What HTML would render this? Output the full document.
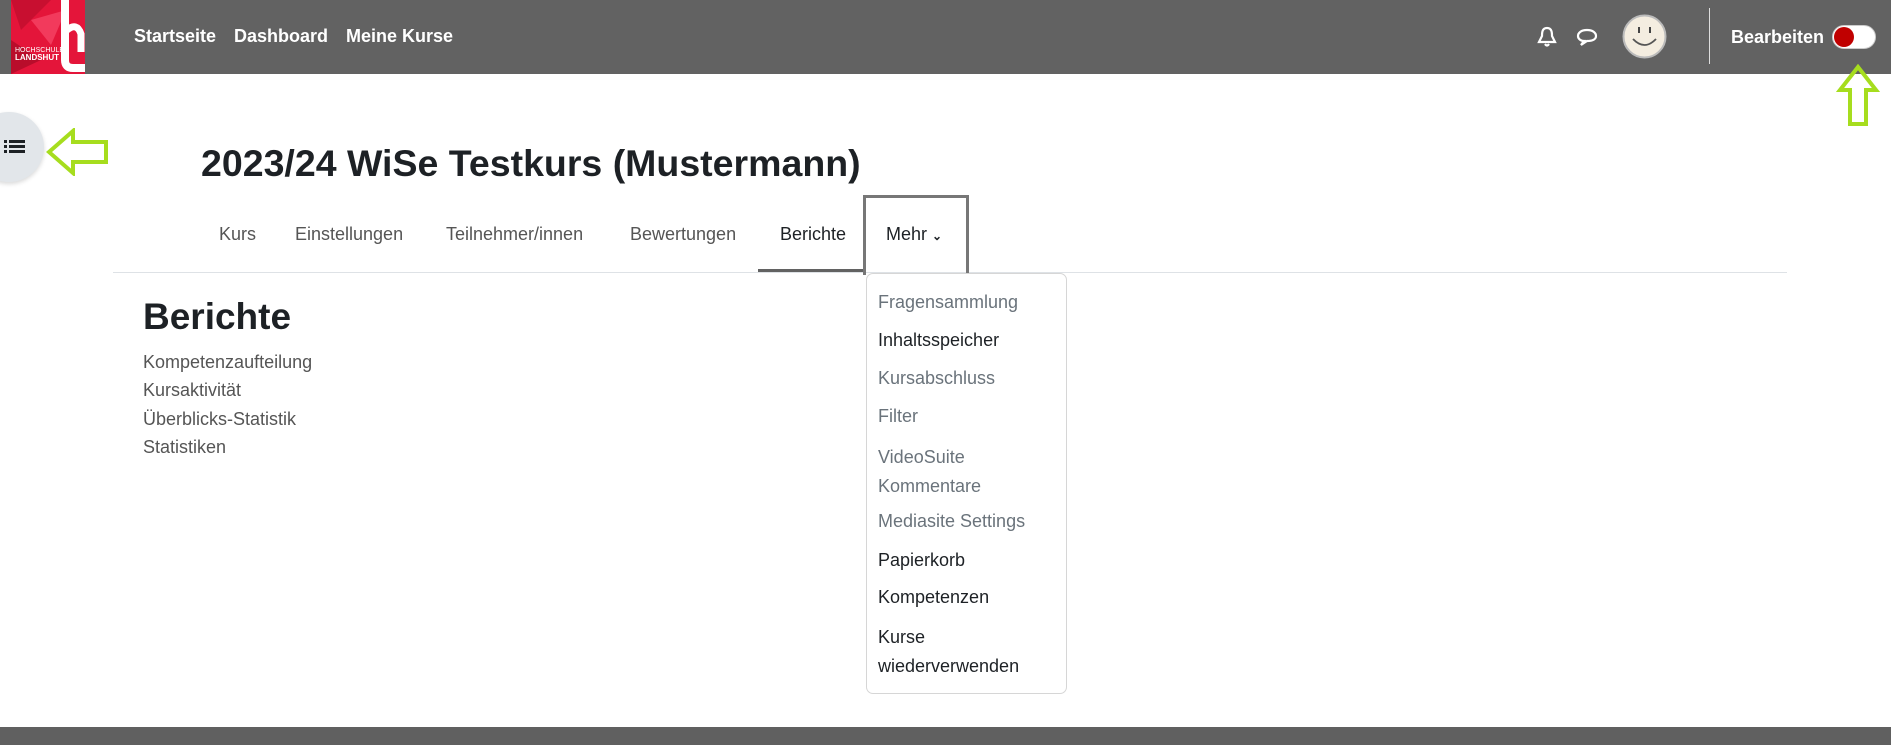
<!DOCTYPE html>
<html><head><meta charset="utf-8"><style>
*{box-sizing:border-box;margin:0;padding:0}
body{width:1891px;height:745px;overflow:hidden;background:#fff;font-family:"Liberation Sans",sans-serif;position:relative;color:#1d2125}
.nav{position:absolute;left:0;top:0;width:1891px;height:74px;background:#626262}
.nav a{position:absolute;top:26px;color:#fff;font-weight:bold;font-size:18px}
.abs{position:absolute}
.tab{position:absolute;top:224px;font-size:18px;color:#555}
.dd{position:absolute;left:866px;top:273px;width:201px;height:421px;border:1px solid #d6d6d6;border-radius:7px;background:#fff}
.dd div{position:absolute;left:11px;font-size:18px;color:#6a737b}
.dd div.k{color:#1d2125}
.li{position:absolute;left:143px;font-size:18px;color:#555}
</style></head><body>
<div class="nav">
 <svg class="abs" style="left:11px;top:0" width="74" height="74" viewBox="0 0 74 74">
  <rect width="74" height="74" fill="#e4153a"/>
  <polygon points="0,0 40,0 10,30" fill="#c80f30"/>
  <polygon points="20,20 55,10 40,45" fill="#f23a5c"/>
  <polygon points="0,40 30,60 0,74" fill="#b90d2b"/>
  <path d="M54 0 V60 Q54 68 62 68 H74" fill="none" stroke="#fff" stroke-width="8"/>
  <path d="M56 30 Q66 22 70 34 V52" fill="none" stroke="#fff" stroke-width="7"/>
  <text x="4" y="52" font-size="7" fill="#fff" font-family="Liberation Sans">HOCHSCHULE</text>
  <text x="4" y="60" font-size="8" fill="#fff" font-weight="bold" font-family="Liberation Sans">LANDSHUT</text>
 </svg>
 <a style="left:134px">Startseite</a>
 <a style="left:234px">Dashboard</a>
 <a style="left:346px">Meine Kurse</a>
 <svg class="abs" style="left:1537px;top:26px" width="20" height="22" viewBox="0 0 20 22"><path d="M10 2 C5 2 5 7 5 10 L2 16 H18 L15 10 C15 7 15 2 10 2Z M8 18 Q10 21 12 18" fill="none" stroke="#fff" stroke-width="2.2"/></svg>
 <svg class="abs" style="left:1576px;top:27px" width="22" height="20" viewBox="0 0 22 20"><path d="M11 3 C5 3 2 6 2 9 C2 12 5 14 8 14 L5 18 L11 14 C17 14 20 12 20 9 C20 6 17 3 11 3Z" fill="none" stroke="#fff" stroke-width="2.2"/></svg>
 <svg class="abs" style="left:1622px;top:14px" width="45" height="45" viewBox="0 0 45 45"><circle cx="22.5" cy="22.5" r="21" fill="#f4ede0" stroke="#bbb" stroke-width="2"/><rect x="16" y="13" width="2" height="6" fill="#444"/><rect x="27" y="13" width="2" height="6" fill="#444"/><path d="M11 25 Q22.5 37 34 25" fill="none" stroke="#555" stroke-width="1.8"/></svg>
 <div class="abs" style="left:1709px;top:8px;width:1px;height:56px;background:#ddd"></div>
 <a style="left:1731px;top:27px">Bearbeiten</a>
 <div class="abs" style="left:1832px;top:25px;width:44px;height:24px;border-radius:12px;background:#fff;border:1px solid #ccc"></div>
 <div class="abs" style="left:1834px;top:27px;width:20px;height:20px;border-radius:10px;background:#c00000"></div>
</div>
<svg class="abs" style="left:1836px;top:64px" width="44" height="64" viewBox="0 0 44 64"><polygon points="22,3 40,26 30,26 30,60 14,60 14,26 4,26" fill="none" stroke="#a6dd1e" stroke-width="4"/></svg>
<div class="abs" style="left:-26px;top:112px;width:70px;height:70px;border-radius:35px;background:#e2e6ea;box-shadow:0 2px 4px rgba(0,0,0,.15)"></div>
<svg class="abs" style="left:4px;top:139px" width="22" height="18" viewBox="0 0 22 18"><g fill="#1d2125"><rect x="0" y="1" width="3" height="3"/><rect x="5" y="1" width="16" height="3"/><rect x="0" y="6" width="3" height="3"/><rect x="5" y="6" width="16" height="3"/><rect x="0" y="11" width="3" height="3"/><rect x="5" y="11" width="16" height="3"/></g></svg>
<svg class="abs" style="left:46px;top:128px" width="64" height="48" viewBox="0 0 64 48"><polygon points="3,24 27,3 27,14 60,14 60,34 27,34 27,45" fill="none" stroke="#a6dd1e" stroke-width="4"/></svg>
<div class="abs" style="left:201px;top:142px;font-size:37.5px;font-weight:bold;color:#1d2125">2023/24 WiSe Testkurs (Mustermann)</div>
<div class="tab" style="left:219px">Kurs</div>
<div class="tab" style="left:295px">Einstellungen</div>
<div class="tab" style="left:446px">Teilnehmer/innen</div>
<div class="tab" style="left:630px">Bewertungen</div>
<div class="tab" style="left:780px;color:#1d2125">Berichte</div>
<div class="tab" style="left:886px;color:#1d2125">Mehr <span style="font-size:12px;font-weight:bold">&#8964;</span></div>
<div class="abs" style="left:113px;top:272px;width:1674px;height:1px;background:#dee2e6"></div>
<div class="abs" style="left:758px;top:269px;width:106px;height:3px;background:#626262"></div>
<div class="abs" style="left:863px;top:195px;width:106px;height:80px;border:3px solid #777;border-bottom:none"></div>
<div class="dd">
 <div style="top:18px">Fragensammlung</div>
 <div class="k" style="top:56px">Inhaltsspeicher</div>
 <div style="top:94px">Kursabschluss</div>
 <div style="top:132px">Filter</div>
 <div style="top:169px;line-height:29px">VideoSuite<br>Kommentare</div>
 <div style="top:237px">Mediasite Settings</div>
 <div class="k" style="top:276px">Papierkorb</div>
 <div class="k" style="top:313px">Kompetenzen</div>
 <div class="k" style="top:349px;line-height:29px">Kurse<br>wiederverwenden</div>
</div>
<div class="abs" style="left:143px;top:296px;font-size:37px;font-weight:bold;color:#1d2125">Berichte</div>
<div class="li" style="top:352px">Kompetenzaufteilung</div>
<div class="li" style="top:380px">Kursaktivität</div>
<div class="li" style="top:409px">Überblicks-Statistik</div>
<div class="li" style="top:437px">Statistiken</div>
<div class="abs" style="left:0;top:727px;width:1891px;height:18px;background:#606060"></div>
</body></html>
